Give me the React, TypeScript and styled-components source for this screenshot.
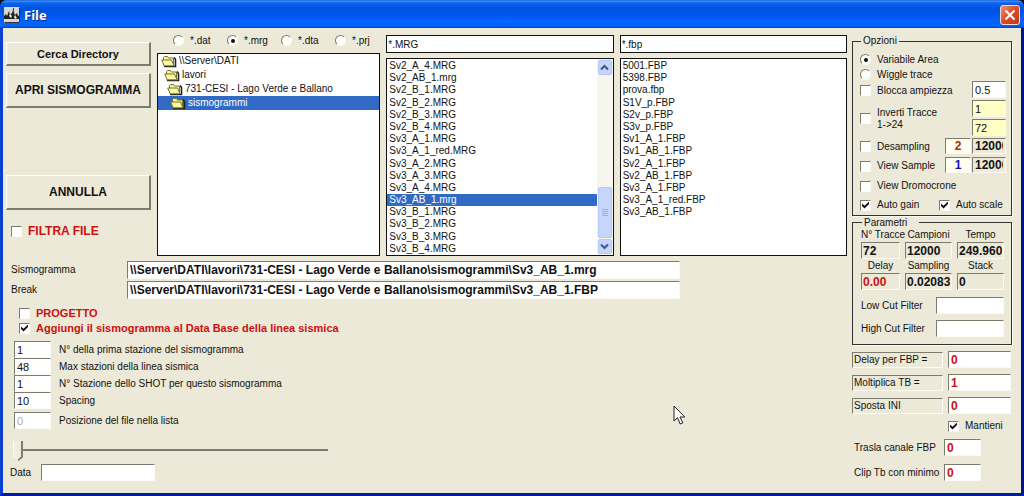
import React from 'react';
import styled, { createGlobalStyle, css } from 'styled-components';

const face = '#ece9d8';
const shade = '#7d7a6e';
const red = '#cc1111';
const sans = '"Liberation Sans", Arial, sans-serif';

const GlobalStyle = createGlobalStyle`
  *, *::before, *::after { box-sizing: border-box; }
  body {
    margin: 0;
    background: #10131c;
    color: #111;
    font: 10px/12px ${sans};
  }
  input, button { font: inherit; color: inherit; }
`;

const Window = styled.main`
  position: relative;
  display: flex;
  flex-direction: column;
  min-height: 100vh;
  overflow: hidden;
  border-radius: 7px 7px 0 0;
  background: #0a3fd0;
`;

const TitleBar = styled.header`
  display: flex;
  align-items: center;
  gap: 4px;
  height: 28px;
  padding: 2px 4px 0;
  background: linear-gradient(#1454c8 0, #3b92fb 1px, #0a62ee 3px, #0053e1 8px, #0055e8 14px, #0066ff 22px, #0062f8 26px, #0040bd 28px);
`;

const Title = styled.h1`
  flex: 1;
  margin: 0;
  color: #fff;
  font: bold 13px/16px "Open Sans", "Noto Sans", sans-serif;
  text-shadow: 1px 1px 0 #0a2a90;
`;

const CloseButton = styled.button`
  display: grid;
  place-items: center;
  width: 20px;
  height: 20px;
  padding: 0;
  border: 1px solid #f3d8d0;
  border-radius: 3px;
  background: linear-gradient(135deg, #f0906c, #dd4a24 50%, #c03a14);
`;

const Body = styled.div`
  display: flex;
  flex: 1;
  align-items: flex-start;
  gap: 5px;
  padding: 7px 9px 10px 3px;
  border: solid;
  border-width: 0 3px 3px;
  border-color: #0a3fd0 #00148c #001ea0 #0a3fd0;
  background: ${face};
`;

const Main = styled.div`
  flex: 1;
  min-width: 0;
`;

const Browser = styled.section`
  display: grid;
  grid-template-columns: 145px 223fr 227fr 227fr;
  column-gap: 6px;
  height: 221px;
`;

const Actions = styled.div`
  display: flex;
  flex-direction: column;
  gap: 7px;
  padding-top: 7px;
`;

const PushButton = styled.button<{ $large?: boolean }>`
  height: ${(p) => (p.$large ? 35 : 24)}px;
  padding: 0;
  border: solid;
  border-width: 1px 2px 2px 1px;
  border-color: #fff ${shade} ${shade} #fff;
  background: ${face};
  font: bold ${(p) => (p.$large ? 12 : 11)}px/12px ${sans};
  white-space: nowrap;
`;

const Spacer = styled.div`
  height: 53px;
`;

const sunken = css`
  border: 1px solid;
  border-color: ${shade} #fbfaf4 #fbfaf4 ${shade};
`;

const Check = styled.input.attrs({ type: 'checkbox' })`
  ${sunken}
  appearance: none;
  flex: none;
  width: 11px;
  height: 11px;
  margin: 0;
  background: #fff;
  &:checked::before {
    content: '';
    display: block;
    width: 7px;
    height: 7px;
    margin: 1px;
    background: #111;
    clip-path: polygon(0 30%, 36% 62%, 100% 0, 100% 36%, 36% 100%, 0 66%);
  }
`;

const Radio = styled.input.attrs({ type: 'radio' })`
  appearance: none;
  flex: none;
  display: grid;
  place-items: center;
  width: 11px;
  height: 11px;
  margin: 0;
  border: 1px solid;
  border-color: ${shade} #fbfaf4 #fbfaf4 ${shade};
  border-radius: 50%;
  background: #fdfdfa;
  &:checked::before {
    content: '';
    width: 4px;
    height: 4px;
    border-radius: 50%;
    background: #111;
  }
`;

const Option = styled.label<{ $h?: number; $alert?: boolean }>`
  display: flex;
  align-items: center;
  gap: 6px;
  height: ${(p) => (p.$h ? `${p.$h}px` : 'auto')};
  white-space: nowrap;
  ${(p) => p.$alert && css`color: ${red}; font: bold 11px/12px ${sans};`}
`;

const FilterOption = styled(Option)`
  padding: 8px 0 0 5px;
  font-size: 12px;
`;

const Pane = styled.div`
  display: flex;
  flex-direction: column;
  gap: 5px;
  min-width: 0;
`;

const TypeRow = styled.div`
  display: grid;
  grid-template-columns: repeat(4, 54px);
  height: 13px;
  padding-left: 16px;
`;

const ListFrame = styled.div`
  display: flex;
  flex: 1;
  min-height: 0;
  border: 1px solid #111;
  background: #fff;
`;

const Folders = styled.ul`
  flex: 1;
  margin: 0;
  padding: 0;
  list-style: none;
`;

const Folder = styled.li<{ $depth: number; $selected?: boolean }>`
  display: flex;
  align-items: center;
  gap: 2px;
  height: 14px;
  padding-left: ${(p) => 3 + p.$depth * 3}px;
  white-space: nowrap;
  ${(p) => p.$selected && css`background: #316ac5; color: #fff;`}
`;

const Files = styled.ul`
  display: grid;
  grid-template-rows: repeat(16, 1fr);
  flex: 1;
  margin: 0;
  padding: 1px 0 0;
  list-style: none;
`;

const FileItem = styled.li<{ $selected?: boolean }>`
  padding-left: 2px;
  overflow: hidden;
  white-space: nowrap;
  ${(p) => p.$selected && css`background: #316ac5; color: #fff;`}
`;

const PatternInput = styled.input`
  width: 100%;
  height: 18px;
  padding: 0 1px;
  border: 1px solid #111;
  background: #fff;
`;

const ScrollBar = styled.div`
  display: flex;
  flex-direction: column;
  width: 16px;
  padding: 1px;
  background: #f6f5ee;
`;

const ScrollButton = styled.button`
  display: grid;
  place-items: center;
  height: 15px;
  padding: 0;
  border: 1px solid #b4c8f6;
  border-radius: 2px;
  background: #c6d5fc;
`;

const ScrollTrack = styled.div`
  display: flex;
  flex: 1;
  flex-direction: column;
  justify-content: flex-end;
`;

const ScrollThumb = styled.div`
  display: grid;
  place-items: center;
  height: 51px;
  margin-bottom: 1px;
  border: 1px solid #b4c8f6;
  border-radius: 2px;
  background: #c6d5fc;
`;

const Paths = styled.section`
  display: grid;
  grid-template-columns: 110px minmax(0, 553px);
  gap: 2px 6px;
  align-items: center;
  padding: 5px 0 0 5px;
`;

const Field = styled.input<{ $tone?: string; $bold?: boolean; $color?: string; $center?: boolean }>`
  ${sunken}
  width: 100%;
  min-width: 0;
  height: 17px;
  padding: 0 2px;
  background: ${(p) => p.$tone ?? '#fff'};
  color: ${(p) => p.$color ?? '#111'};
  font-size: 11px;
  text-align: ${(p) => (p.$center ? 'center' : 'left')};
  ${(p) => p.$bold && css`font: bold 12px/12px ${sans};`}
`;

const PathField = styled(Field)`
  height: 18px;
`;

const Flags = styled.section`
  display: flex;
  flex-direction: column;
  gap: 3px;
  padding: 8px 0 0 13px;
`;

const Stations = styled.section`
  display: grid;
  grid-template-columns: 37px 1fr;
  column-gap: 8px;
  align-items: center;
  padding: 7px 0 0 8px;
`;

const LastStation = styled.div`
  display: grid;
  grid-template-columns: subgrid;
  grid-column: 1 / -1;
  align-items: center;
  padding-top: 3px;
`;

const Slider = styled.input.attrs({ type: 'range' })`
  appearance: none;
  display: block;
  width: 315px;
  height: 20px;
  margin: 12px 0 3px 7px;
  background: transparent;
  &::-webkit-slider-runnable-track {
    height: 20px;
    background: linear-gradient(${shade}, ${shade}) 8px 8px / 100% 2px no-repeat;
  }
  &::-webkit-slider-thumb {
    appearance: none;
    width: 10px;
    height: 20px;
    background:
      linear-gradient(135deg, transparent 38%, ${shade} 38%) 5px 15px / 5px 5px no-repeat,
      linear-gradient(90deg, #fff 1px, #f1efe2 1px, ${face} 8px, ${shade} 8px);
    clip-path: polygon(0 0, 100% 0, 100% 80%, 55% 100%, 0 80%);
  }
`;

const DateRow = styled.label`
  display: grid;
  grid-template-columns: 31px 114px;
  align-items: center;
  padding-left: 4px;
`;

const Side = styled.aside`
  flex: none;
  width: 160px;
`;

const Group = styled.fieldset`
  min-width: 0;
  margin: 0;
  border: 1px solid #333;
  box-shadow: 1px 1px 0 #fbfaf4;
`;

const OptionsGroup = styled(Group)`
  display: flex;
  justify-content: space-between;
  height: 181px;
  padding: 5px 5px 0 7px;
`;

const Legend = styled.legend`
  height: 12px;
  margin-left: 1px;
  padding: 0 2px;
`;

const ParamLegend = styled(Legend)`
  height: 8px;
  padding: 0 12px 0 2px;
  line-height: 10px;
`;

const OptionList = styled.div`
  flex: none;
  width: 80px;
`;

const AutoRow = styled.div`
  display: grid;
  grid-template-columns: 79px auto;
`;

const OptionFields = styled.div`
  display: grid;
  grid-template-columns: 26px 34px;
  grid-auto-rows: 16px;
  gap: 3px 1px;
  padding-top: 29px;
  height: 0;
`;

const WideCell = styled(Field)`
  grid-column: 2;
`;

const SmallCell = styled(Field)`
  height: 16px;
`;

const ParamsGroup = styled(Group)`
  height: 127px;
  margin-top: 2px;
  padding: 3px 7px 0 8px;
`;

const Readings = styled.div`
  display: grid;
  grid-template-columns: 39px 47px 47px;
  justify-content: space-between;
  row-gap: 1px;
`;

const Reading = styled.label`
  text-align: center;
  white-space: nowrap;
`;

const ReadingField = styled(Field)`
  padding: 0 1px;
`;

const SideRow = styled.label<{ $w: number; $gap: number }>`
  display: grid;
  grid-template-columns: 1fr ${(p) => p.$w}px;
  align-items: center;
  margin-top: ${(p) => p.$gap}px;
  padding-right: 1px;
  white-space: nowrap;
`;

const FilterRow = styled(SideRow)`
  padding: 0;
`;

const Caption = styled.span`
  ${sunken}
  width: 91px;
  height: 16px;
  padding: 1px;
`;

const MantieniRow = styled(Option)`
  padding: 6px 0 1px 96px;
`;

const ShiftRow = styled(SideRow)`
  padding: 0 31px 0 2px;
`;

const Pointer = styled.svg`
  position: absolute;
  left: 673px;
  top: 405px;
  pointer-events: none;
`;

const FolderIcon = () => (
  <svg width="16" height="13" viewBox="0 0 16 13" aria-hidden="true">
    <path d="M3 11.5h11.500V4.500l-1.500-2" fill="none" stroke="#222" strokeWidth="1.600" />
    <path d="M2.500 10V2.500l1-1h3l1 1.500h5V10z" fill="#f6f29a" stroke="#77742e" />
    <path d="M.7 5h9.800l2.500 5.800H3.200z" fill="#fbf8a8" stroke="#77742e" />
  </svg>
);

const AppIcon = () => (
  <svg width="16" height="16" viewBox="0 0 16 16" aria-hidden="true">
    <rect width="16" height="16" fill="#d6d6d2" />
    <path d="M0 9l2-2 1 2 2-5 1 4 2-2 1-3 2 5 2-2 1 3 2-1v4H0z" fill="#222" />
    <path d="M5 9l1-2 2 2-1 2zM10 10l1-2 2 3-2 1z" fill="#e8e8e4" />
    <path d="M9.500 1v4" stroke="#444" />
    <path d="M.5 15.500h15V.5" fill="none" stroke="#333" />
  </svg>
);

const Chevron = ({ up }: { up?: boolean }) => (
  <svg width="9" height="7" viewBox="0 0 9 7" aria-hidden="true">
    <path d={up ? 'M1 5.500l3.500-3.500L8 5.500' : 'M1 1.500L4.500 5 8 1.500'} fill="none" stroke="#3f5786" strokeWidth="2" />
  </svg>
);

const folders = ['\\\\Server\\DATI', 'lavori', '731-CESI - Lago Verde e Ballano', 'sismogrammi'];

const mrgFiles = [
  'Sv2_A_4.MRG', 'Sv2_AB_1.mrg', 'Sv2_B_1.MRG', 'Sv2_B_2.MRG', 'Sv2_B_3.MRG', 'Sv2_B_4.MRG',
  'Sv3_A_1.MRG', 'Sv3_A_1_red.MRG', 'Sv3_A_2.MRG', 'Sv3_A_3.MRG', 'Sv3_A_4.MRG', 'Sv3_AB_1.mrg',
  'Sv3_B_1.MRG', 'Sv3_B_2.MRG', 'Sv3_B_3.MRG', 'Sv3_B_4.MRG',
];

const fbpFiles = [
  '5001.FBP', '5398.FBP', 'prova.fbp', 'S1V_p.FBP', 'S2v_p.FBP', 'S3v_p.FBP', 'Sv1_A_1.FBP',
  'Sv1_AB_1.FBP', 'Sv2_A_1.FBP', 'Sv2_AB_1.FBP', 'Sv3_A_1.FBP', 'Sv3_A_1_red.FBP', 'Sv3_AB_1.FBP',
];

const base = '\\\\Server\\DATI\\lavori\\731-CESI - Lago Verde e Ballano\\sismogrammi\\';

const stations = [
  ['1', 'N° della prima stazione del sismogramma'],
  ['48', 'Max stazioni della linea sismica'],
  ['1', 'N° Stazione dello SHOT per questo sismogramma'],
  ['10', 'Spacing'],
];

const pale = '#ffffc4';
const cream = '#fffff0';

export default function App() {
  return (
    <>
      <GlobalStyle />
      <Window>
        <TitleBar>
          <AppIcon />
          <Title>File</Title>
          <CloseButton aria-label="Chiudi">
            <svg width="12" height="12" viewBox="0 0 12 12" aria-hidden="true">
              <path d="M1.500 1.500l9 9M10.500 1.500l-9 9" stroke="#fff" strokeWidth="2" />
            </svg>
          </CloseButton>
        </TitleBar>
        <Body>
          <Main>
            <Browser>
              <Actions>
                <PushButton>Cerca Directory</PushButton>
                <PushButton $large>APRI SISMOGRAMMA</PushButton>
                <Spacer />
                <PushButton $large>ANNULLA</PushButton>
                <FilterOption $alert><Check />FILTRA FILE</FilterOption>
              </Actions>
              <Pane>
                <TypeRow>
                  {['*.dat', '*.mrg', '*.dta', '*.prj'].map((t) => (
                    <Option key={t} $h={11}><Radio name="type" defaultChecked={t === '*.mrg'} />{t}</Option>
                  ))}
                </TypeRow>
                <ListFrame>
                  <Folders role="listbox" aria-label="Directory">
                    {folders.map((f, i) => (
                      <Folder key={f} role="option" aria-selected={i === 3} $depth={i} $selected={i === 3}>
                        <FolderIcon />{f}
                      </Folder>
                    ))}
                  </Folders>
                </ListFrame>
              </Pane>
              <Pane>
                <PatternInput aria-label="Filtro sismogrammi" defaultValue="*.MRG" />
                <ListFrame>
                  <Files role="listbox" aria-label="Sismogrammi">
                    {mrgFiles.map((f, i) => (
                      <FileItem key={f} role="option" aria-selected={i === 11} $selected={i === 11}>{f}</FileItem>
                    ))}
                  </Files>
                  <ScrollBar>
                    <ScrollButton aria-label="Su"><Chevron up /></ScrollButton>
                    <ScrollTrack>
                      <ScrollThumb>
                        <svg width="6" height="8" viewBox="0 0 6 8" aria-hidden="true">
                          <path d="M0 .5h6M0 2.500h6M0 4.500h6M0 6.500h6" stroke="#94aee8" />
                        </svg>
                      </ScrollThumb>
                    </ScrollTrack>
                    <ScrollButton aria-label="Giù"><Chevron /></ScrollButton>
                  </ScrollBar>
                </ListFrame>
              </Pane>
              <Pane>
                <PatternInput aria-label="Filtro break" defaultValue="*.fbp" />
                <ListFrame>
                  <Files role="listbox" aria-label="Break">
                    {fbpFiles.map((f) => <FileItem key={f} role="option">{f}</FileItem>)}
                  </Files>
                </ListFrame>
              </Pane>
            </Browser>

            <Paths>
              <label htmlFor="sismogramma">Sismogramma</label>
              <PathField id="sismogramma" $bold defaultValue={`${base}Sv3_AB_1.mrg`} />
              <label htmlFor="break">Break</label>
              <PathField id="break" $bold defaultValue={`${base}Sv3_AB_1.FBP`} />
            </Paths>

            <Flags>
              <Option $alert><Check />PROGETTO</Option>
              <Option $alert><Check defaultChecked />Aggiungi il sismogramma al Data Base della linea sismica</Option>
            </Flags>

            <Stations>
              {stations.map(([value, text], i) => (
                <React.Fragment key={text}>
                  <Field id={`st${i}`} defaultValue={value} />
                  <label htmlFor={`st${i}`}>{text}</label>
                </React.Fragment>
              ))}
              <LastStation>
                <Field id="posizione" disabled $color="#aaa" defaultValue="0" />
                <label htmlFor="posizione">Posizione del file nella lista</label>
              </LastStation>
            </Stations>

            <Slider aria-label="Posizione" min={0} max={100} defaultValue={0} />
            <DateRow>Data<Field /></DateRow>
          </Main>

          <Side>
            <OptionsGroup>
              <Legend>Opzioni</Legend>
              <OptionList>
                <Option $h={15}><Radio name="draw" defaultChecked />Variabile Area</Option>
                <Option $h={15}><Radio name="draw" />Wiggle trace</Option>
                <Option $h={17}><Check />Blocca ampiezza</Option>
                <Option $h={39}><Check /><span>Inverti Tracce<br />1-&gt;24</span></Option>
                <Option $h={17}><Check />Desampling</Option>
                <Option $h={22}><Check />View Sample</Option>
                <Option $h={18}><Check />View Dromocrone</Option>
                <AutoRow>
                  <Option $h={20}><Check defaultChecked />Auto gain</Option>
                  <Option $h={20}><Check defaultChecked />Auto scale</Option>
                </AutoRow>
              </OptionList>
              <OptionFields>
                <WideCell aria-label="Ampiezza" defaultValue="0.5" />
                <WideCell aria-label="Prima traccia" $tone={pale} defaultValue="1" />
                <WideCell aria-label="Ultima traccia" $tone={pale} defaultValue="72" />
                <SmallCell aria-label="Desampling" $tone={cream} $bold $center $color="#b02a10" defaultValue="2" />
                <SmallCell aria-label="Campioni desampling" $tone={face} $bold defaultValue="12000" />
                <SmallCell aria-label="View sample" $tone={cream} $bold $center $color="#1111bb" defaultValue="1" />
                <SmallCell aria-label="Campioni view" $tone={face} $bold defaultValue="12000" />
              </OptionFields>
            </OptionsGroup>

            <ParamsGroup>
              <ParamLegend>Parametri</ParamLegend>
              <Readings>
                <Reading htmlFor="tracce">N° Tracce</Reading>
                <Reading htmlFor="campioni">Campioni</Reading>
                <Reading htmlFor="tempo">Tempo</Reading>
                <ReadingField id="tracce" $tone={face} $bold defaultValue="72" />
                <ReadingField id="campioni" $tone={face} $bold defaultValue="12000" />
                <ReadingField id="tempo" $tone={face} $bold defaultValue="249.960" />
                <Reading htmlFor="delay">Delay</Reading>
                <Reading htmlFor="sampling">Sampling</Reading>
                <Reading htmlFor="stack">Stack</Reading>
                <ReadingField id="delay" $tone={face} $bold $color={red} defaultValue="0.00" />
                <ReadingField id="sampling" $tone={face} $bold defaultValue="0.02083" />
                <ReadingField id="stack" $tone={face} $bold defaultValue="0" />
              </Readings>
              <FilterRow $w={68} $gap={7}>Low Cut Filter<Field /></FilterRow>
              <FilterRow $w={68} $gap={6}>High Cut Filter<Field /></FilterRow>
            </ParamsGroup>

            <SideRow $w={63} $gap={6}><Caption>Delay per FBP =</Caption><Field $bold $color={red} defaultValue="0" /></SideRow>
            <SideRow $w={63} $gap={6}><Caption>Moltiplica TB =</Caption><Field $bold $color={red} defaultValue="1" /></SideRow>
            <SideRow $w={63} $gap={6}><Caption>Sposta INI</Caption><Field $bold $color={red} defaultValue="0" /></SideRow>
            <MantieniRow><Check defaultChecked />Mantieni</MantieniRow>
            <ShiftRow $w={37} $gap={6}>Trasla canale FBP<Field $bold $color={red} defaultValue="0" /></ShiftRow>
            <ShiftRow $w={37} $gap={8}>Clip Tb con minimo<Field $bold $color={red} defaultValue="0" /></ShiftRow>
          </Side>
        </Body>
        <Pointer width="13" height="21" viewBox="0 0 13 21" aria-hidden="true">
          <path d="M1 1v15l3.500-3.300L7.200 19l2.600-1.100L7 12h4.800z" fill="#fff" stroke="#222" />
        </Pointer>
      </Window>
    </>
  );
}
